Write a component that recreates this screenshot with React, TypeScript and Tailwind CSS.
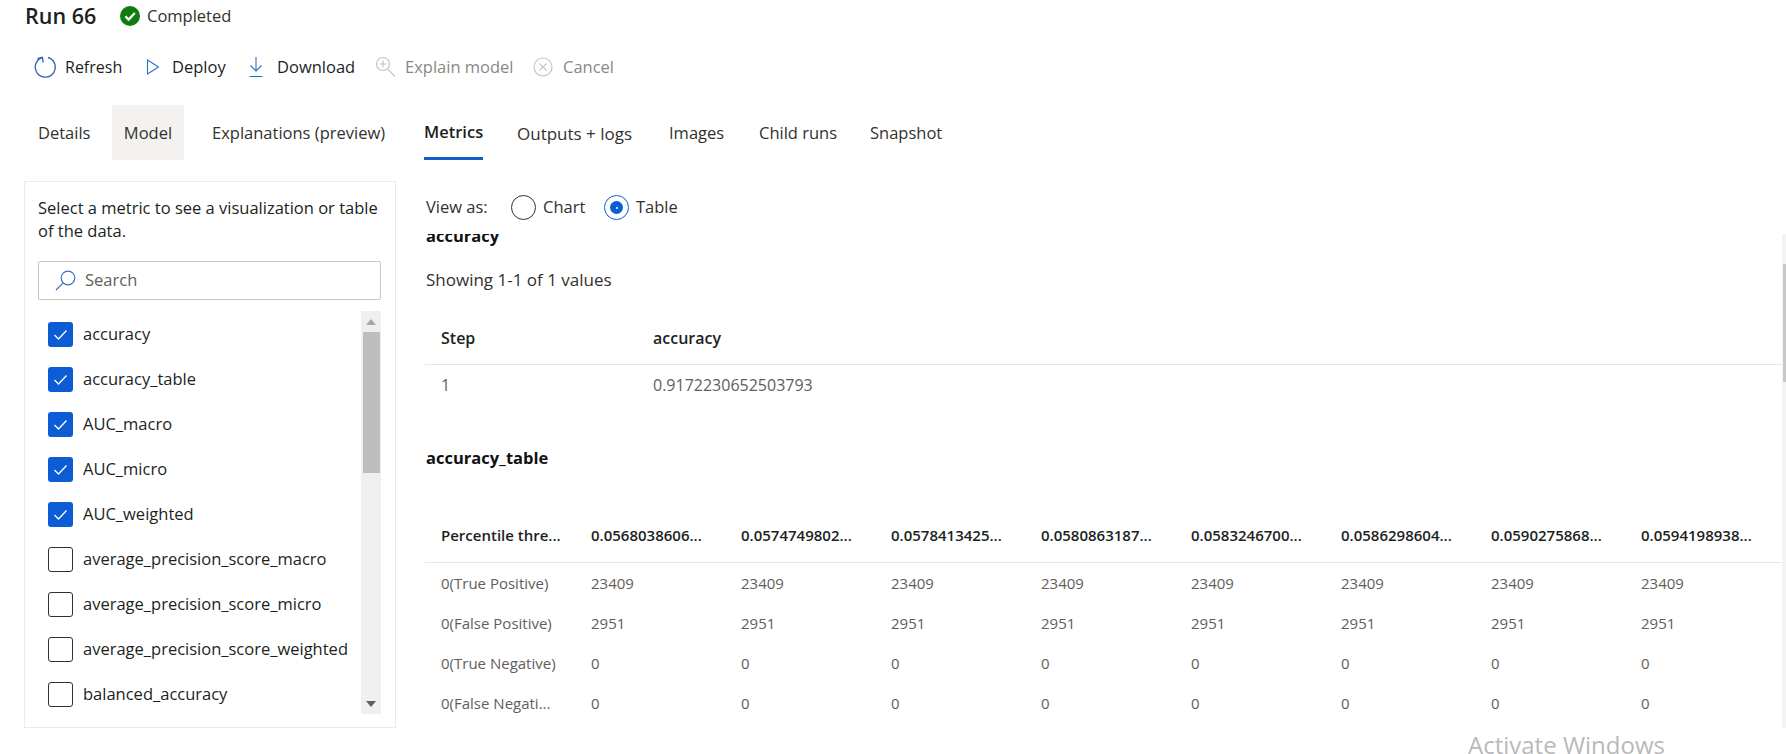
const font = "font-['Open_Sans','Noto_Sans',sans-serif]";

function RefreshIcon() {
  return (
    <svg width="22" height="24" viewBox="0 0 22 24" fill="none" stroke="#2f5fb8" strokeWidth="1.3" className="shrink-0">
      <path d="M14 2.5 A10 10 0 1 1 8.2 2.6" />
      <path d="M3.4 3.6 L8.3 2.4 L9.3 7.5" />
    </svg>
  );
}
function DeployIcon() {
  return (
    <svg width="14" height="20" viewBox="0 0 14 20" fill="none" stroke="#2f6fc6" strokeWidth="1.1" className="shrink-0">
      <path d="M1.5 3 L12.5 10 L1.5 17 Z" />
    </svg>
  );
}
function DownloadIcon() {
  return (
    <svg width="14" height="22" viewBox="0 0 14 22" fill="none" stroke="#2f6fc6" strokeWidth="1.1" className="shrink-0">
      <path d="M7 1 V15 M1.5 9.5 L7 15 L12.5 9.5 M0.5 20.5 H13.5" />
    </svg>
  );
}
function ExplainIcon() {
  return (
    <svg width="21" height="22" viewBox="0 0 21 22" fill="none" stroke="#c4c4c4" strokeWidth="1.2" className="shrink-0">
      <circle cx="8" cy="8" r="6.5" />
      <path d="M12.6 12.8 L20 20.5 M8 4.5 V11.5 M4.5 8 H11.5" />
    </svg>
  );
}
function CancelIcon() {
  return (
    <svg width="20" height="20" viewBox="0 0 20 20" fill="none" stroke="#c4c4c4" strokeWidth="1.2" className="shrink-0">
      <circle cx="10" cy="10" r="9" />
      <path d="M6.3 6.3 L13.7 13.7 M13.7 6.3 L6.3 13.7" />
    </svg>
  );
}
function StatusIcon() {
  return (
    <svg width="20" height="20" viewBox="0 0 20 20" className="shrink-0">
      <circle cx="10" cy="10" r="10" fill="#107c10" />
      <path d="M5.4 10.4 L8.6 13.6 L14.8 7" fill="none" stroke="#fff" strokeWidth="2.2" />
    </svg>
  );
}
function SearchIcon() {
  return (
    <svg width="21" height="21" viewBox="0 0 21 21" fill="none" stroke="#3f6fc4" strokeWidth="1.2" className="shrink-0">
      <circle cx="13" cy="8" r="6.8" />
      <path d="M8.2 12.8 L1 20" />
    </svg>
  );
}

const metrics = [
  ["accuracy", true],
  ["accuracy_table", true],
  ["AUC_macro", true],
  ["AUC_micro", true],
  ["AUC_weighted", true],
  ["average_precision_score_macro", false],
  ["average_precision_score_micro", false],
  ["average_precision_score_weighted", false],
  ["balanced_accuracy", false],
] as const;

const thresholds = [
  "0.0568038606...",
  "0.0574749802...",
  "0.0578413425...",
  "0.0580863187...",
  "0.0583246700...",
  "0.0586298604...",
  "0.0590275868...",
  "0.0594198938...",
];

const rows = [
  { label: "0(True Positive)", value: "23409" },
  { label: "0(False Positive)", value: "2951" },
  { label: "0(True Negative)", value: "0" },
  { label: "0(False Negati...", value: "0" },
];

function ToolbarItem({ icon, label, disabled, gap, w, size }: { icon: React.ReactNode; label: string; disabled?: boolean; gap: string; w: string; size?: string }) {
  return (
    <div className={`flex items-center ${gap} ${w}`}>
      {icon}
      <span className={`${size ?? ""} ${disabled ? "text-[#8a8886]" : "text-[#201f1e]"}`}>{label}</span>
    </div>
  );
}

function CheckRow({ label, checked }: { label: string; checked: boolean }) {
  return (
    <div className="flex h-[45px] items-center gap-[10px] pl-[10px]">
      {checked ? (
        <div className="flex h-[25px] w-[25px] items-center justify-center rounded-[3px] bg-[#0b5cd5]">
          <svg width="15" height="12" viewBox="0 0 15 12" fill="none" stroke="#fff" strokeWidth="1.3">
            <path d="M1.5 6 L5.5 10 L13.5 1.5" />
          </svg>
        </div>
      ) : (
        <div className="h-[25px] w-[25px] rounded-[3px] border border-[#323130] bg-white" />
      )}
      <span className="text-[#201f1e]">{label}</span>
    </div>
  );
}

function Radio({ label, checked, w }: { label: string; checked?: boolean; w: string }) {
  return (
    <div className={`flex items-center gap-[7px] ${w}`}>
      {checked ? (
        <div className="flex h-[25px] w-[25px] items-center justify-center rounded-full border border-[#0b5cd5] bg-white">
          <div className="flex h-[13px] w-[13px] items-center justify-center rounded-full bg-[#0b5cd5]">
            <div className="h-[2px] w-[2px] rounded-full bg-white" />
          </div>
        </div>
      ) : (
        <div className="h-[25px] w-[25px] rounded-full border border-[#323130] bg-white" />
      )}
      <span className="text-[#323130]">{label}</span>
    </div>
  );
}

export default function App() {
  return (
    <div className={`relative h-[754px] w-[1786px] overflow-hidden bg-white text-[16.5px] ${font}`}>
      <div className="flex h-[32px] items-center pl-[25px]">
        <span className="w-[95px] text-[21.5px] font-semibold text-[#201f1e]">Run 66</span>
        <StatusIcon />
        <span className="ml-[7px] text-[#323130]">Completed</span>
      </div>

      <div className="mt-[15px] flex h-[40px] items-center pl-[34px]">
        <ToolbarItem icon={<RefreshIcon />} label="Refresh" gap="gap-[9px]" w="w-[112px]" size="text-[16px]" />
        <ToolbarItem icon={<DeployIcon />} label="Deploy" gap="gap-[12px]" w="w-[103px]" />
        <ToolbarItem icon={<DownloadIcon />} label="Download" gap="gap-[14px]" w="w-[126px]" />
        <ToolbarItem icon={<ExplainIcon />} label="Explain model" disabled gap="gap-[9px]" w="w-[158px]" />
        <ToolbarItem icon={<CancelIcon />} label="Cancel" disabled gap="gap-[10px]" w="w-[90px]" />
      </div>

      <div className="mt-[18px] flex h-[55px] pl-[38px] text-[#323130]">
        <div className="flex w-[74px] items-center pt-[2px]">Details</div>
        <div className="flex w-[72px] items-center justify-center bg-[#f3f2f1] pt-[2px]">Model</div>
        <div className="flex w-[240px] items-center pl-[28px] pt-[2px]">Explanations (preview)</div>
        <div className="flex w-[93px] flex-col items-start">
          <div className="flex flex-1 items-center border-b-[3px] border-[#0f5fc4] pt-[2px] font-semibold text-[#201f1e]">Metrics</div>
        </div>
        <div className="flex w-[152px] items-center pt-[2px] text-[17px]">Outputs + logs</div>
        <div className="flex w-[90px] items-center pt-[2px]">Images</div>
        <div className="flex w-[111px] items-center pt-[2px]">Child runs</div>
        <div className="flex items-center pt-[2px]">Snapshot</div>
      </div>

      <div className="mt-[21px] flex pl-[24px]">
        <div className="h-[547px] w-[372px] shrink-0 border border-[#edebe9] pl-[13px] pr-[13px]">
          <p className="mt-[14px] w-[345px] text-[#201f1e] leading-[23px]">Select a metric to see a visualization or table of the data.</p>
          <div className="mt-[19px] flex h-[39px] w-[343px] items-center gap-[9px] rounded-[2px] border border-[#c8c6c4] pl-[16px] text-[#605e5c]">
            <SearchIcon />
            <span>Search</span>
          </div>
          <div className="mt-[11px] flex h-[403px] w-[343px]">
            <div className="flex-1 overflow-hidden pt-[1px]">
              {metrics.map(([label, checked]) => (
                <CheckRow key={label} label={label} checked={checked} />
              ))}
            </div>
            <div className="flex h-full w-[20px] flex-col items-center bg-[#efefef]">
              <div className="flex h-[21px] w-full items-center justify-center">
                <svg width="10" height="6" viewBox="0 0 10 6"><path d="M0 6 L5 0 L10 6 Z" fill="#a6a6a6" /></svg>
              </div>
              <div className="h-[141px] w-[17px] bg-[#bdbdbd]" />
              <div className="flex-1" />
              <div className="flex h-[21px] w-full items-center justify-center">
                <svg width="10" height="6" viewBox="0 0 10 6"><path d="M0 0 L5 6 L10 0 Z" fill="#5f5f5f" /></svg>
              </div>
            </div>
          </div>
        </div>

        <div className="ml-[29px] min-w-0 flex-1">
          <div className="mt-[14px] flex h-[25px] items-center text-[#323130]">
            <span className="w-[86px] pl-[1px]">View as:</span>
            <Radio label="Chart" w="w-[93px]" />
            <Radio label="Table" checked w="w-[80px]" />
          </div>

          <div className="mt-[14px] flex h-[494px]">
            <div className="min-w-0 flex-1 overflow-hidden">
              <div className="-mt-[8px] h-[20px] pl-[1px] font-bold leading-[20px] text-[#111]">accuracy</div>
              <div className="mt-[24px] h-[20px] pl-[1px] text-[17px] leading-[20px] text-[#323130]">Showing 1-1 of 1 values</div>

              <div className="mt-[21px] flex h-[54px] items-center border-b border-[#e6e6e6] pl-[16px] text-[16px] font-semibold text-[#201f1e]">
                <span className="w-[212px] shrink-0">Step</span>
                <span>accuracy</span>
              </div>
              <div className="flex h-[40px] items-center pl-[16px] text-[16px] text-[#605e5c]">
                <span className="w-[212px] shrink-0">1</span>
                <span>0.9172230652503793</span>
              </div>

              <div className="mt-[43px] h-[20px] pl-[1px] font-bold leading-[20px] text-[#111]">accuracy_table</div>

              <div className="mt-[40px] flex h-[55px] items-center border-b border-[#e6e6e6] pl-[16px] text-[15px] font-semibold text-[#201f1e]">
                <span className="w-[150px] shrink-0 truncate">Percentile thre...</span>
                {thresholds.map((t) => (
                  <span key={t} className="w-[150px] shrink-0">{t}</span>
                ))}
              </div>
              <div className="text-[15px] text-[#605e5c]">
                {rows.map((r) => (
                  <div key={r.label} className="flex h-[40px] items-center pl-[16px]">
                    <span className="w-[150px] shrink-0 truncate">{r.label}</span>
                    {thresholds.map((t) => (
                      <span key={t} className="w-[150px] shrink-0">{r.value}</span>
                    ))}
                  </div>
                ))}
              </div>
            </div>
            <div className="h-full w-[4px] shrink-0 bg-[#f3f3f3] pt-[30px]">
              <div className="ml-[1px] h-[118px] w-[3px] bg-[#c8c8c8]" />
            </div>
          </div>
        </div>
      </div>

      <div className="absolute left-[1468px] top-[730px] text-[24px] leading-[30px] text-[#b9b9b9]">Activate Windows</div>
    </div>
  );
}
